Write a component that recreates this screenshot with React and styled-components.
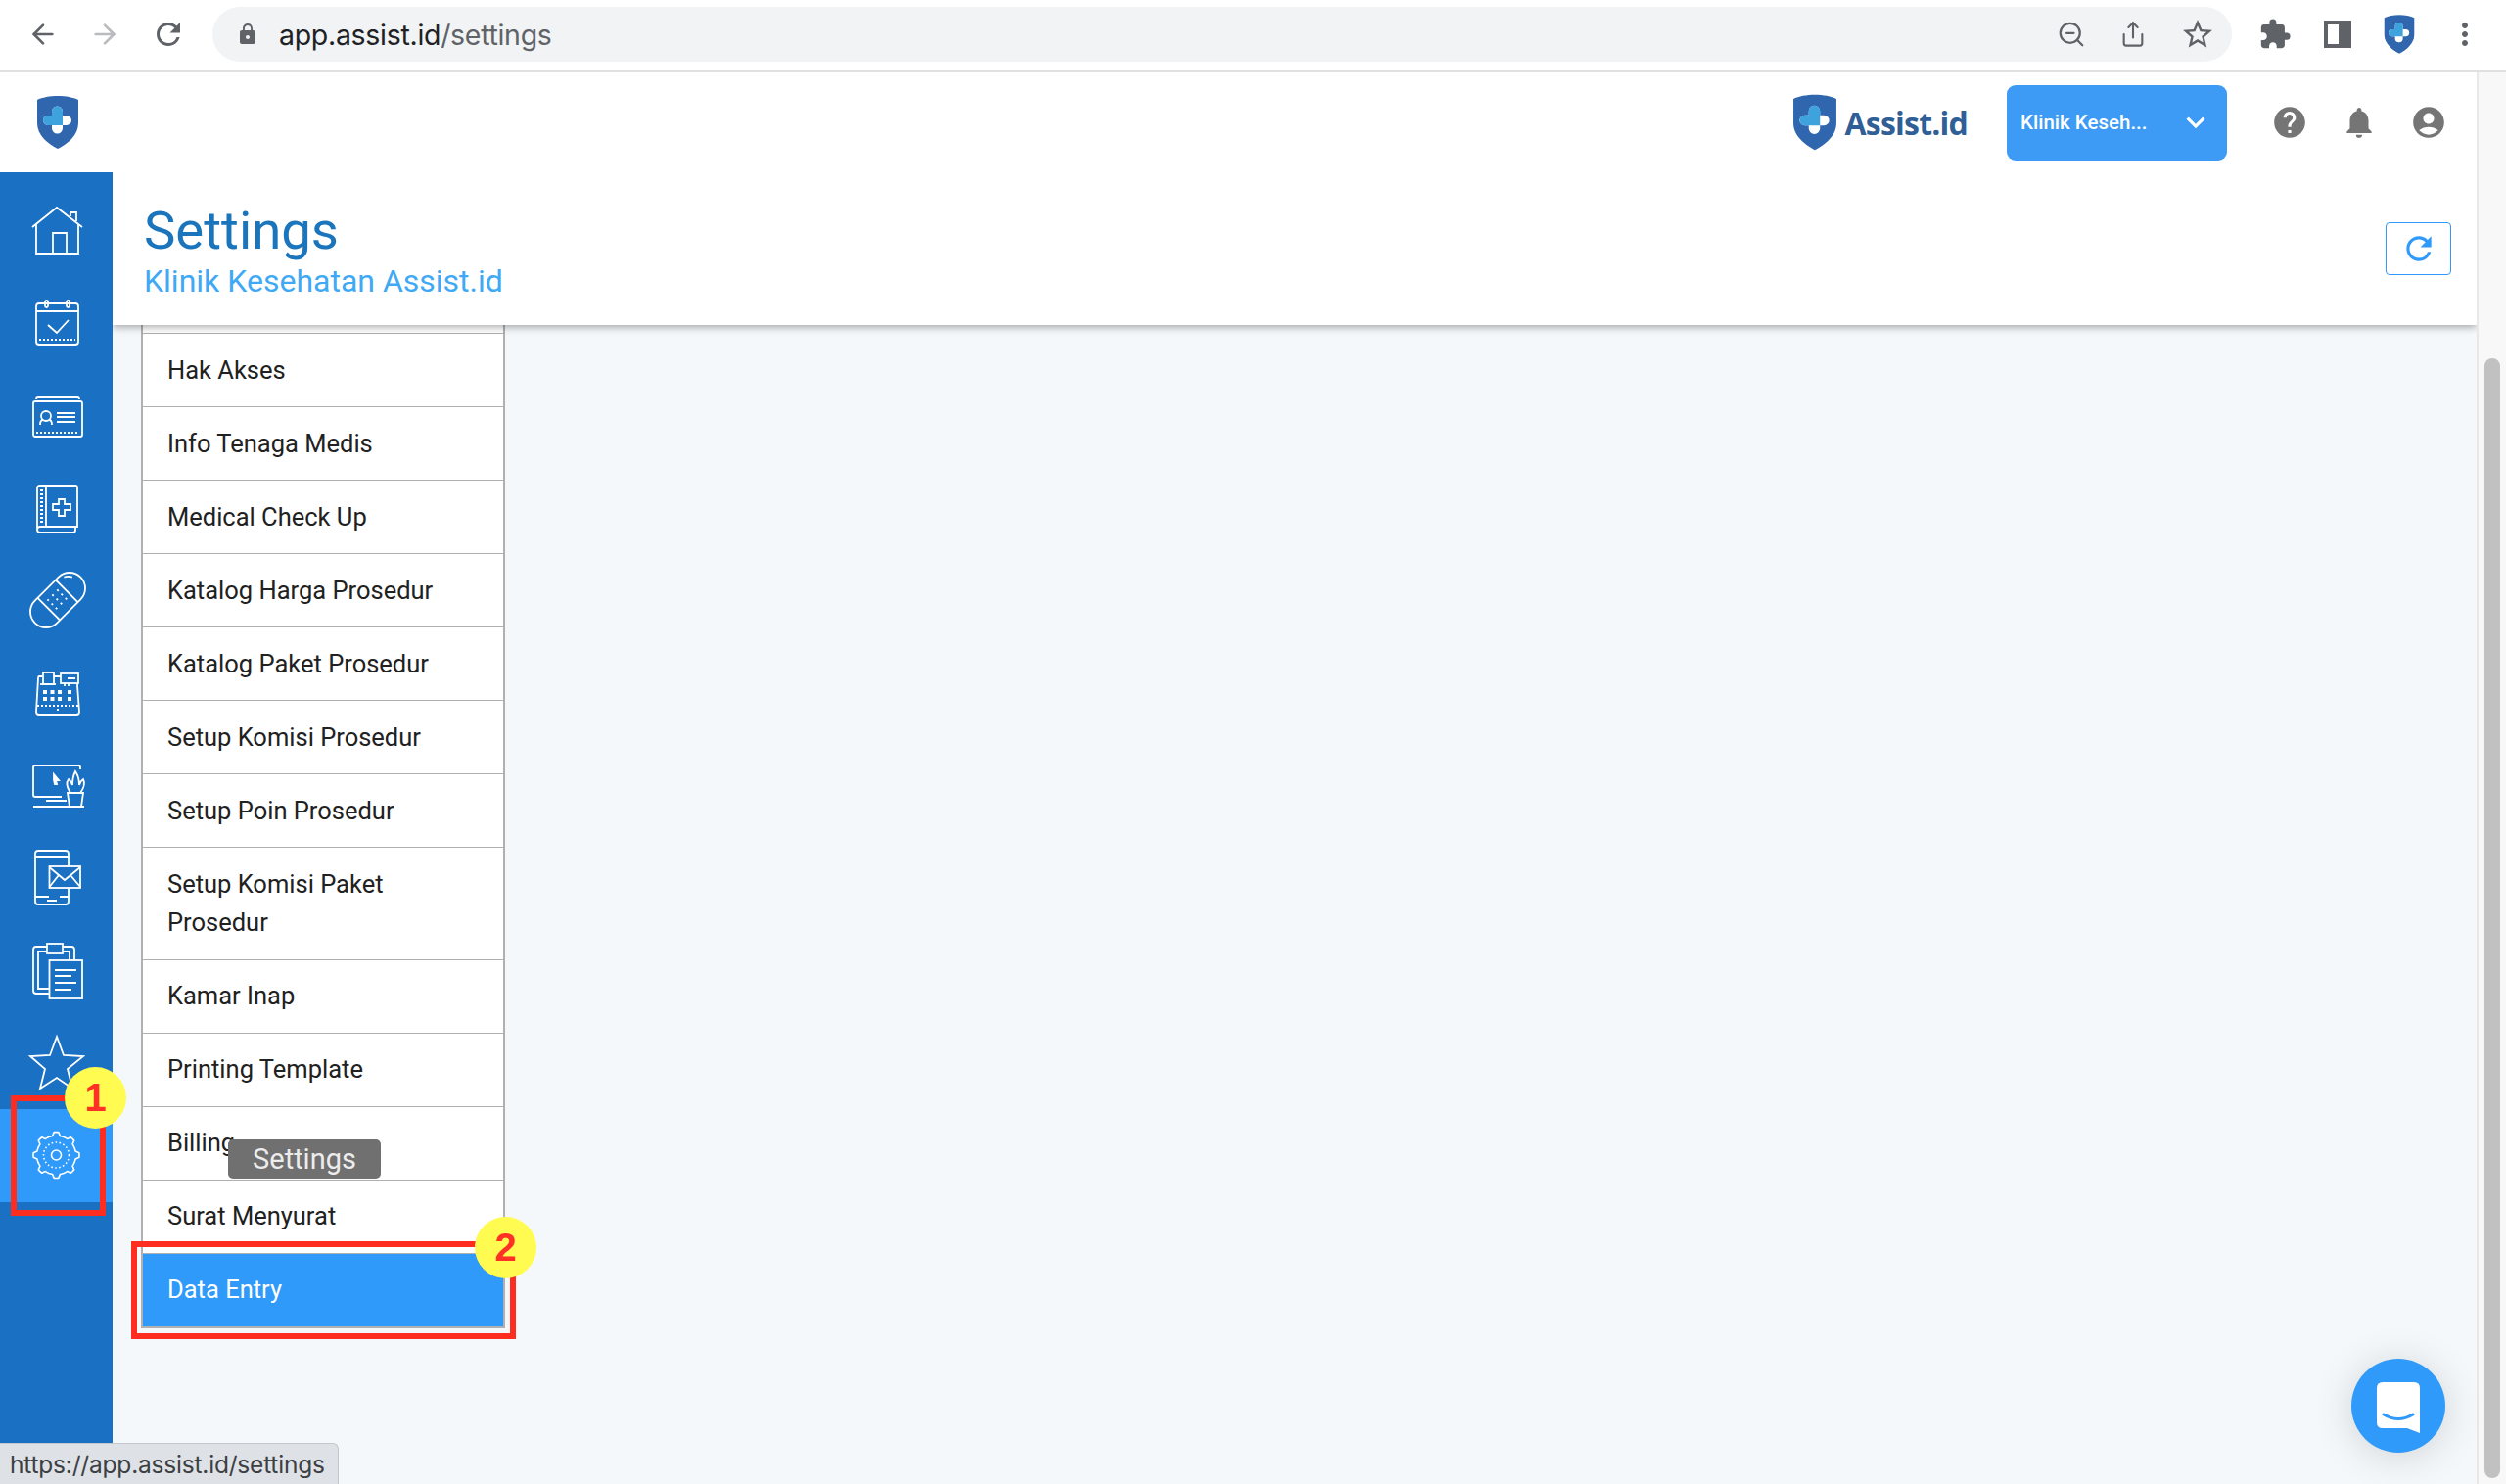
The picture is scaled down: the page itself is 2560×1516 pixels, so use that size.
import React from "react";
import styled, { createGlobalStyle } from "styled-components";
import { ArrowLeft, ArrowRight, ZoomOut, Share } from "lucide-react";
import {
  MdRefresh,
  MdLock,
  MdStarBorder,
  MdExtension,
  MdMoreVert,
  MdHelp,
  MdNotifications,
  MdAccountCircle,
  MdKeyboardArrowDown,
} from "react-icons/md";

const MENU = [
  "Hak Akses",
  "Info Tenaga Medis",
  "Medical Check Up",
  "Katalog Harga Prosedur",
  "Katalog Paket Prosedur",
  "Setup Komisi Prosedur",
  "Setup Poin Prosedur",
  "Setup Komisi Paket Prosedur",
  "Kamar Inap",
  "Printing Template",
  "Billing",
  "Surat Menyurat",
  "Data Entry",
];

const gearPath = () => {
  const points = [];
  for (let i = 0; i < 64; i++) {
    const a = (i / 64) * Math.PI * 2;
    const tooth = Math.cos(a * 8) > 0.1 ? 23.5 : 20;
    points.push(`${(27.5 + Math.sin(a) * tooth).toFixed(1)} ${(28 - Math.cos(a) * tooth).toFixed(1)}`);
  }
  return `M${points.join("L")}Z`;
};

const HomeIcon = () => (
  <path d="M3 25L28 5L54 25M7 22V52H50V22M24 52V31H38V52M42 14V10H48V19" />
);
const CalendarIcon = () => (
  <g transform="translate(-1 0)">
    <rect x="8" y="8" width="43" height="42" rx="3" />
    <path d="M8 16H51M20 30L29 38L41 25" />
    <rect x="17" y="5" width="3" height="7" rx="1.5" />
    <rect x="39" y="5" width="3" height="7" rx="1.5" />
    <path d="M11 45H48" strokeDasharray="2 2" />
  </g>
);
const CardIcon = () => (
  <g transform="translate(-1 3)">
    <rect x="5" y="11" width="50" height="36" rx="2" />
    <path d="M8 9Q8 7 10 7H50Q52 7 52 9" />
    <circle cx="18" cy="26" r="5" />
    <path d="M12 35Q12 30 15 30M24 35Q24 30 21 30M29 23H48M29 27H48M29 32H48" />
    <path d="M8 43H52" strokeDasharray="2 2" />
  </g>
);
const BookIcon = () => (
  <g transform="translate(-1 0)">
    <path d="M12 47H50V7Q50 5 48 5H12Q9 5 9 8V50Q9 53 12 53H46Q48 53 48 50V47M12 47Q9 47 9 50" />
    <path d="M18 5V47" />
    <path d="M13.5 9V45" strokeWidth="3" strokeDasharray="2 2" />
    <path d="M31 19H37V24H43V30H37V36H31V30H25V24H31Z" />
  </g>
);
const BandageIcon = () => (
  <g transform="translate(29 28) rotate(-45)">
    <rect x="-33" y="-16" width="66" height="32" rx="16" />
    <path d="M-13 -16V16M13 -16V16M21 -12Q25 -10 27 -6" />
    <path d="M-7 -8V9M0 -8V9M7 -8V9" strokeDasharray="2 4" />
  </g>
);
const RegisterIcon = () => (
  <g transform="translate(-1 0)">
    <path d="M14 11H11Q10 11 10 13L8 47Q8 50 11 50H49Q52 50 52 47L50 20V18M26 11H33" />
    <rect x="15" y="7" width="11" height="12" />
    <path d="M12 19H28" />
    <rect x="33" y="8" width="18" height="10" />
    <path d="M37 18V21M41 18V21M40 13H48" />
    <path d="M15 27H19M22.5 27H26.5M30 27H34M40 27H44M15 34H19M22.5 34H26.5M30 34H34M40 34H44" strokeWidth="4" />
    <path d="M9 41H51" strokeDasharray="2 2" />
    <path d="M29 45H31" />
  </g>
);
const ComputerIcon = () => (
  <>
    <path d="M52 12V10Q52 8 50 8H6Q4 8 4 10V38Q4 40 6 40H33M17 44H38M4 50H56" />
    <path d="M39 36H55L53 50H41ZM42 36Q36 27 40 22Q43 24 44 28Q44 20 47 14Q51 20 51 28Q52 24 55 22Q58 28 52 36" />
    <path d="M25 17L30 23L27 23L28 27L26 27L25 23Z" fill="#fff" />
  </>
);
const PhoneIcon = () => (
  <g transform="translate(-1 0)">
    <path d="M41 16V3Q41 0 38 0H10Q7 0 7 3V52Q7 55 10 55H38Q41 55 41 52V38M7 6H41M7 47H21M41 47H32M19 51H29" />
    <rect x="21.5" y="16" width="31.5" height="22" />
    <path d="M21.5 17L37 30L53 17M21.5 37L31 25M53 37L43 25" />
  </g>
);
const ClipboardIcon = () => (
  <g transform="translate(-1 0)">
    <path d="M19 4H8Q5 4 5 7V49Q5 52 8 52H21M35 4H44Q47 4 47 7V18M19 9H10V47H21M35 9H42V18" />
    <rect x="19" y="1" width="16" height="10" />
    <rect x="21.5" y="18" width="33.5" height="39" />
    <path d="M27 28H49M27 34H44M27 41H49M27 48H44" />
  </g>
);
const StarIcon = () => (
  <path d="M28 1L35 20L55 21L39 34L44 54L28 43L11 54L16 34L1 21L21 20Z" />
);
const GearIcon = () => (
  <g strokeWidth="1.6">
    <path d={gearPath()} strokeLinejoin="round" />
    <circle cx="27.5" cy="28" r="13" strokeDasharray="1.5 2.5" />
    <circle cx="27.5" cy="28" r="5" />
  </g>
);

const NAV = [
  HomeIcon,
  CalendarIcon,
  CardIcon,
  BookIcon,
  BandageIcon,
  RegisterIcon,
  ComputerIcon,
  PhoneIcon,
  ClipboardIcon,
  StarIcon,
  GearIcon,
];

const Shield = ({ width, height }) => (
  <svg width={width} height={height} viewBox="0 0 44 54">
    <path d="M22 0C30 0 38 1.5 43 4V28C43 40 32 49 22 54C12 49 1 40 1 28V4C6 1.5 14 0 22 0Z" fill="#2f66ae" />
    <path d="M16 20V16a5.5 5.5 0 0 1 11 0V20H31a5 5 0 0 1 0 10H27V33a5.5 5.5 0 0 1 -11 0V30H12a5 5 0 0 1 0 -10Z" fill="#fff" />
    <path d="M16 20V16a5.5 5.5 0 0 1 11 0V30H12a5 5 0 0 1 0 -10Z" fill="#3ea3dc" />
  </svg>
);

export default function App() {
  return (
    <Page>
      <GlobalStyle />
      <BrowserBar>
        <NavButtons>
          <ArrowLeft size={32} color="#5f6368" strokeWidth={2} />
          <ArrowRight size={32} color="#b9bbbe" strokeWidth={2} />
          <MdRefresh size={36} color="#5f6368" />
        </NavButtons>
        <Omnibox>
          <MdLock size={24} color="#5f6368" />
          <UrlText>
            app.assist.id<UrlPath>/settings</UrlPath>
          </UrlText>
          <OmniIcons>
            <ZoomOut size={30} color="#5f6368" strokeWidth={1.8} />
            <Share size={28} color="#5f6368" strokeWidth={1.8} />
            <MdStarBorder size={36} color="#5f6368" />
          </OmniIcons>
        </Omnibox>
        <ExtensionIcons>
          <MdExtension size={34} color="#5f6368" />
          <svg width="28" height="28" viewBox="0 0 28 28">
            <path d="M0 0H28V28H0ZM4 4V24H15V4Z" fill="#5f6368" fillRule="evenodd" />
          </svg>
          <Shield width={32} height={40} />
          <MdMoreVert size={36} color="#5f6368" />
        </ExtensionIcons>
      </BrowserBar>

      <Viewport>
        <AppColumn>
          <AppHeader>
            <Shield width={44} height={54} />
            <HeaderRight>
              <Brand>
                <Shield width={46} height={58} />
                <BrandName>Assist.id</BrandName>
              </Brand>
              <ClinicSelect>
                <span>Klinik Keseh...</span>
                <MdKeyboardArrowDown size={38} color="#fff" />
              </ClinicSelect>
              <HeaderIcons>
                <MdHelp size={38} />
                <MdNotifications size={38} />
                <MdAccountCircle size={38} />
              </HeaderIcons>
            </HeaderRight>
          </AppHeader>

          <Body>
            <Sidebar>
              {NAV.map((Icon, i) => (
                <NavItem key={i} $active={i === NAV.length - 1}>
                  <NavSvg viewBox="0 0 56 56">
                    <Icon />
                  </NavSvg>
                </NavItem>
              ))}
            </Sidebar>
            <Main>
              <TitlePanel>
                <div>
                  <Title>Settings</Title>
                  <Subtitle>Klinik Kesehatan Assist.id</Subtitle>
                </div>
                <RefreshButton>
                  <MdRefresh size={38} color="#2f9afa" />
                </RefreshButton>
              </TitlePanel>
              <MenuList>
                {MENU.map((label) => (
                  <MenuRow key={label} $active={label === "Data Entry"}>
                    {label}
                  </MenuRow>
                ))}
              </MenuList>
            </Main>
          </Body>
        </AppColumn>
        <Scrollbar>
          <ScrollThumb />
        </Scrollbar>
      </Viewport>

      <Tooltip>Settings</Tooltip>
      <RedBoxOne />
      <RedBoxTwo />
      <BadgeOne>1</BadgeOne>
      <BadgeTwo>2</BadgeTwo>
      <ChatButton>
        <svg width="44" height="52" viewBox="0 0 44 52">
          <path d="M6 0H38Q44 0 44 6V52L31 47H6Q0 47 0 41V6Q0 0 6 0Z" fill="#fff" />
          <path d="M7 33Q22 42 37 33" fill="none" stroke="#2f9afa" strokeWidth="3" strokeLinecap="round" />
        </svg>
      </ChatButton>
      <StatusBar>https://app.assist.id/settings</StatusBar>
    </Page>
  );
}

const GlobalStyle = createGlobalStyle`
  html, body {
    margin: 0;
    padding: 0;
    background: #f5f8fb;
  }
  * {
    box-sizing: border-box;
  }
`;

const Page = styled.div`
  position: relative;
  width: 2560px;
  height: 1516px;
  overflow: hidden;
  display: flex;
  flex-direction: column;
  font-family: Roboto, "Liberation Sans", sans-serif;
`;

const BrowserBar = styled.div`
  height: 74px;
  flex: none;
  display: flex;
  align-items: center;
  padding: 0 0 2px 28px;
  background: #fff;
  border-bottom: 2px solid #dfe0e1;
`;

const NavButtons = styled.div`
  display: flex;
  align-items: center;
  gap: 31px;
  margin-right: 27px;
`;

const Omnibox = styled.div`
  width: 2063px;
  height: 56px;
  display: flex;
  align-items: center;
  padding: 0 0 0 24px;
  border-radius: 28px;
  background: #f1f3f4;
`;

const UrlText = styled.div`
  margin-left: 20px;
  font-family: Inter, sans-serif;
  font-size: 28.5px;
  letter-spacing: -0.3px;
  color: #202124;
`;

const UrlPath = styled.span`
  color: #5f6368;
`;

const OmniIcons = styled.div`
  margin-left: auto;
  padding-right: 17px;
  display: flex;
  align-items: center;
  gap: 34px;
`;

const ExtensionIcons = styled.div`
  display: flex;
  align-items: center;
  gap: 33px;
  margin-left: 27px;
`;

const Viewport = styled.div`
  flex: 1;
  display: flex;
  min-height: 0;
`;

const AppColumn = styled.div`
  flex: 1;
  min-width: 0;
  display: flex;
  flex-direction: column;
`;

const AppHeader = styled.header`
  position: relative;
  z-index: 2;
  height: 102px;
  flex: none;
  display: flex;
  align-items: center;
  justify-content: space-between;
  padding: 0 30px 0 37px;
  background: #fff;
`;

const HeaderRight = styled.div`
  display: flex;
  align-items: center;
`;

const Brand = styled.div`
  display: flex;
  align-items: center;
  gap: 8px;
  margin-right: 40px;
`;

const BrandName = styled.span`
  font-family: "Open Sans", sans-serif;
  font-weight: 700;
  font-size: 32px;
  letter-spacing: -0.8px;
  color: #2f5f96;
`;

const ClinicSelect = styled.div`
  width: 225px;
  height: 77px;
  display: flex;
  align-items: center;
  justify-content: space-between;
  padding: 0 13px 0 14px;
  border-radius: 9px;
  background: #3d9bf5;
  color: #fff;
  font-size: 20.5px;
  font-weight: 500;
`;

const HeaderIcons = styled.div`
  display: flex;
  align-items: center;
  gap: 33px;
  margin-left: 45px;
  color: #757575;
`;

const Body = styled.div`
  flex: 1;
  display: flex;
  min-height: 0;
`;

const Sidebar = styled.nav`
  position: relative;
  z-index: 2;
  width: 115px;
  flex: none;
  padding-top: 12px;
  background: #1a71c4;
`;

const NavItem = styled.div`
  height: 94.5px;
  display: flex;
  align-items: center;
  justify-content: center;
  background: ${(p) => (p.$active ? "#2f9afa" : "transparent")};
`;

const NavSvg = styled.svg`
  width: 56px;
  height: 56px;
  overflow: visible;
  fill: none;
  stroke: #fff;
  stroke-width: 1.8;
`;

const Main = styled.main`
  flex: 1;
  min-width: 0;
  display: flex;
  flex-direction: column;
`;

const TitlePanel = styled.div`
  position: relative;
  z-index: 1;
  height: 156px;
  flex: none;
  display: flex;
  align-items: flex-start;
  justify-content: space-between;
  padding: 26px 26px 0 32px;
  background: #fff;
  box-shadow: 0 2px 8px rgba(0, 0, 0, 0.35);
`;

const Title = styled.h1`
  margin: 0;
  font-size: 54.5px;
  font-weight: 400;
  line-height: 66px;
  color: #1b75bc;
`;

const Subtitle = styled.div`
  font-size: 32px;
  line-height: 38px;
  color: #3fa9f5;
`;

const RefreshButton = styled.div`
  width: 67px;
  height: 54px;
  margin-top: 25px;
  display: flex;
  align-items: center;
  justify-content: center;
  border: 1px solid #2f9afa;
  border-radius: 4px;
`;

const MenuList = styled.div`
  width: 372px;
  margin-left: 29px;
  padding-top: 8px;
  background: #fff;
  border: solid #b0b0b0;
  border-width: 0 2px 2px;
`;

const MenuRow = styled.div`
  padding: 17.5px 32px 17px 25px;
  font-size: 25.5px;
  line-height: 39.5px;
  border-top: 1px solid #b0b0b0;
  color: ${(p) => (p.$active ? "#fff" : "#212121")};
  background: ${(p) => (p.$active ? "#2f9afa" : "#fff")};
`;

const Scrollbar = styled.div`
  position: relative;
  z-index: 2;
  width: 30px;
  flex: none;
  padding: 292px 6px 0 6px;
  background: #f8f8f8;
  border-left: 2px solid #e8e8e8;
`;

const ScrollThumb = styled.div`
  width: 16px;
  height: 1144px;
  border-radius: 8px;
  background: #c1c1c1;
`;

const Tooltip = styled.div`
  position: absolute;
  z-index: 3;
  left: 233px;
  top: 1164px;
  width: 156px;
  height: 40px;
  display: flex;
  align-items: center;
  justify-content: center;
  border-radius: 5px;
  background: #707070;
  color: #ececec;
  font-size: 29px;
`;

const RedBoxOne = styled.div`
  position: absolute;
  z-index: 3;
  left: 11px;
  top: 1119px;
  width: 97px;
  height: 123px;
  border: 6px solid #ff2d20;
`;

const RedBoxTwo = styled.div`
  position: absolute;
  z-index: 3;
  left: 134px;
  top: 1268px;
  width: 393px;
  height: 100px;
  border: 6px solid #ff2d20;
`;

const Badge = styled.div`
  position: absolute;
  z-index: 4;
  width: 63px;
  height: 63px;
  display: flex;
  align-items: center;
  justify-content: center;
  border-radius: 50%;
  background: #fffb50;
  color: #ff3126;
  font-family: "Liberation Sans", sans-serif;
  font-size: 40px;
  font-weight: 700;
`;

const BadgeOne = styled(Badge)`
  left: 66px;
  top: 1090px;
`;

const BadgeTwo = styled(Badge)`
  left: 485px;
  top: 1243px;
`;

const ChatButton = styled.div`
  position: absolute;
  z-index: 3;
  left: 2402px;
  top: 1388px;
  width: 96px;
  height: 96px;
  display: flex;
  align-items: center;
  justify-content: center;
  padding-top: 4px;
  border-radius: 50%;
  background: #2f9afa;
  box-shadow: 0 4px 40px rgba(0, 0, 0, 0.15);
`;

const StatusBar = styled.div`
  position: absolute;
  z-index: 4;
  left: 0;
  bottom: 0;
  width: 346px;
  height: 42px;
  display: flex;
  align-items: center;
  padding-left: 10px;
  background: #dee1e6;
  border: solid #c4c7cc;
  border-width: 1px 1px 0 0;
  border-top-right-radius: 6px;
  color: #3c4043;
  font-family: Inter, sans-serif;
  font-size: 24.5px;
  letter-spacing: -0.2px;
  white-space: nowrap;
`;
